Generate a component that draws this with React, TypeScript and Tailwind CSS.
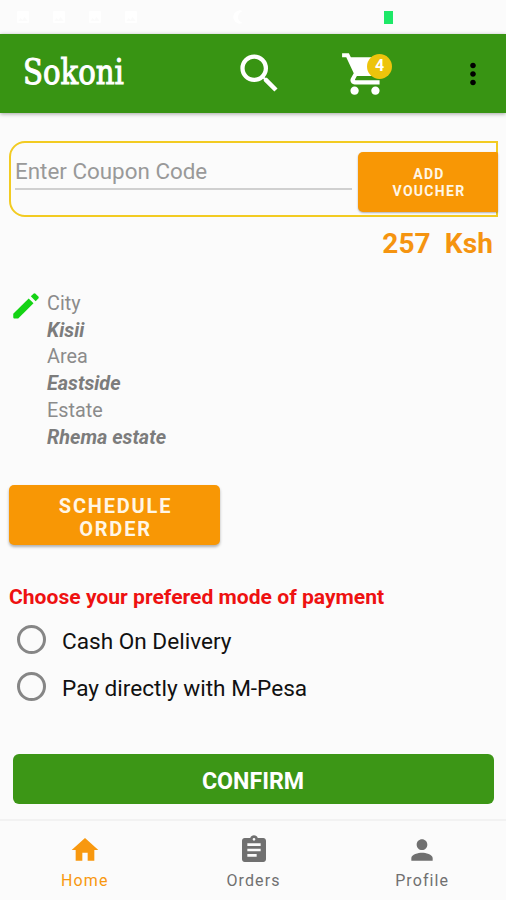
import { useState } from "react";
import type { IconType } from "react-icons";
import {
  MdAssignment,
  MdHome,
  MdImage,
  MdMoreVert,
  MdNightlightRound,
  MdPerson,
  MdSearch,
  MdShoppingCart,
} from "react-icons/md";

type Tab = { id: string; label: string; icon: IconType };

const TABS: Tab[] = [
  { id: "home", label: "Home", icon: MdHome },
  { id: "orders", label: "Orders", icon: MdAssignment },
  { id: "profile", label: "Profile", icon: MdPerson },
];

const ADDRESS = [
  { label: "City", value: "Kisii" },
  { label: "Area", value: "Eastside" },
  { label: "Estate", value: "Rhema estate" },
];

const PAYMENT_MODES = [
  { id: "cash", label: "Cash On Delivery" },
  { id: "mpesa", label: "Pay directly with M-Pesa" },
];

function PencilIcon({ className }: { className?: string }) {
  return (
    <svg viewBox="0 0 24 24" fill="currentColor" className={className} aria-hidden>
      <path d="M3 17.4v2.5c0 .6.4 1 1 1h2.5L17.3 10.1l-3.4-3.4z" />
      <path d="M20.7 6.7a1 1 0 0 0 0-1.4l-2-2a1 1 0 0 0-1.4 0l-1.9 1.9 3.4 3.4z" />
    </svg>
  );
}

function StatusBar() {
  return (
    <div className="flex h-[34px] shrink-0 items-center pl-[15px] text-white">
      <MdImage className="size-4" />
      <MdImage className="ml-5 size-4" />
      <MdImage className="ml-5 size-4" />
      <MdImage className="ml-5 size-4" />
      <MdNightlightRound className="ml-[91px] size-4" />
      <span className="ml-[138px] h-[13px] w-[9px] bg-[#1de867]" />
    </div>
  );
}

function Header() {
  return (
    <header className="flex h-[79px] shrink-0 items-center bg-[#389413] shadow-[0_1px_4px_rgba(0,0,0,0.35)]">
      <h1 className="w-[234px] pb-[4px] pl-[23px] font-['DejaVu_Serif_Condensed','DejaVu_Serif',serif] text-[36px] leading-[42px] text-white [-webkit-text-stroke:1px_white]">
        <span className="inline-block origin-left scale-x-[0.9]">Sokoni</span>
      </h1>
      <button type="button" aria-label="Search" className="text-white">
        <MdSearch className="size-[51px]" />
      </button>
      <button type="button" aria-label="Cart" className="relative ml-[55px] text-white">
        <MdShoppingCart className="size-[50px]" />
        <span className="absolute top-[5px] left-[27px] flex size-[25px] items-center justify-center rounded-full bg-[#edc40c] text-[16px] font-bold">
          4
        </span>
      </button>
      <button type="button" aria-label="More" className="ml-[66px] text-black">
        <MdMoreVert className="size-[34px]" />
      </button>
    </header>
  );
}

export default function App() {
  const [tab, setTab] = useState("home");
  const [mode, setMode] = useState<string | null>(null);

  return (
    <div className="flex h-[900px] w-[506px] flex-col overflow-hidden bg-[#fbfbfb] font-[Roboto,sans-serif]">
      <StatusBar />
      <Header />

      <main className="flex flex-1 flex-col pt-[28px]">
        {/* Coupon */}
        <section className="ml-[9px] flex h-[76px] w-[489px] items-start rounded-l-[16px] border-2 border-[#f2cb22]">
          <input
            placeholder="Enter Coupon Code"
            className="mt-[10px] ml-1 h-[37px] w-[337px] border-b-2 border-[#d0d0d0] text-[22.4px] outline-none placeholder:text-[#999999]"
          />
          <button
            type="button"
            className="mt-[9px] -mr-[2px] ml-[6px] h-[60px] flex-1 rounded-l-[5px] rounded-r-[2px] bg-[#f89705] pt-[2px] pl-[2px] text-[14px] leading-[17px] font-bold tracking-[1.3px] text-[#fff6e6] shadow-[0_1px_2px_rgba(0,0,0,0.3)]"
          >
            ADD
            <br />
            VOUCHER
          </button>
        </section>
        <p className="mt-[10px] pr-[13px] text-right text-[28px] leading-[34px] font-bold tracking-[0.1px] whitespace-pre text-[#f59410]">
          {"257  Ksh"}
        </p>

        {/* Delivery address */}
        <section className="mt-[28px] flex pl-[9px]">
          <button type="button" aria-label="Edit address" className="h-[34px] text-[#14d314]">
            <PencilIcon className="size-[34px]" />
          </button>
          <dl className="ml-1 pt-[2px] text-[19.8px] leading-[26.7px]">
            {ADDRESS.map((a) => (
              <div key={a.label}>
                <dt className="text-[#8b8b8b]">{a.label}</dt>
                <dd className="font-bold text-[#7c7c7c] italic">{a.value}</dd>
              </div>
            ))}
          </dl>
        </section>

        <button
          type="button"
          className="mt-[34px] ml-[9px] h-[60px] w-[211px] rounded-[5px] bg-[#f89705] pt-[5px] pl-[2px] text-[20px] leading-[23px] font-bold tracking-[1.8px] text-[#fff6e6] shadow-[0_2px_3px_rgba(0,0,0,0.3)]"
        >
          SCHEDULE
          <br />
          ORDER
        </button>

        {/* Payment */}
        <h2 className="mt-[38px] pl-[9px] text-[21.1px] leading-[28px] font-bold whitespace-nowrap text-[#ee1111]">
          Choose your prefered mode of payment
        </h2>
        <div className="mt-[5px] flex flex-col">
          {PAYMENT_MODES.map((m) => (
            <label key={m.id} className="flex h-[47px] items-center pl-[17px]">
              <input
                type="radio"
                name="payment"
                checked={mode === m.id}
                onChange={() => setMode(m.id)}
                className="size-[29px] appearance-none rounded-full border-[3px] border-[#868686] checked:bg-[#389413]"
              />
              <span className="pt-[4px] pl-4 text-[22.6px] text-[#111111]">{m.label}</span>
            </label>
          ))}
        </div>

        <button
          type="button"
          className="mx-auto mt-[44px] h-[50px] w-[481px] rounded-[6px] bg-[#3c9616] pt-[5px] text-[23.2px] font-bold text-white"
        >
          CONFIRM
        </button>
      </main>

      <nav className="flex h-[81px] shrink-0 border-t-2 border-[#f2f2f2]">
        {TABS.map(({ id, label, icon: Icon }) => (
          <button
            key={id}
            type="button"
            onClick={() => setTab(id)}
            className={`flex flex-1 flex-col items-center pt-[13px] text-[16px] leading-[20px] tracking-[1.1px] ${
              tab === id ? "text-[#f8980f]" : "text-[#707070]"
            }`}
          >
            <Icon className="ml-px size-[32px]" />
            <span className="mt-[5px] ml-px">{label}</span>
          </button>
        ))}
      </nav>
    </div>
  );
}
